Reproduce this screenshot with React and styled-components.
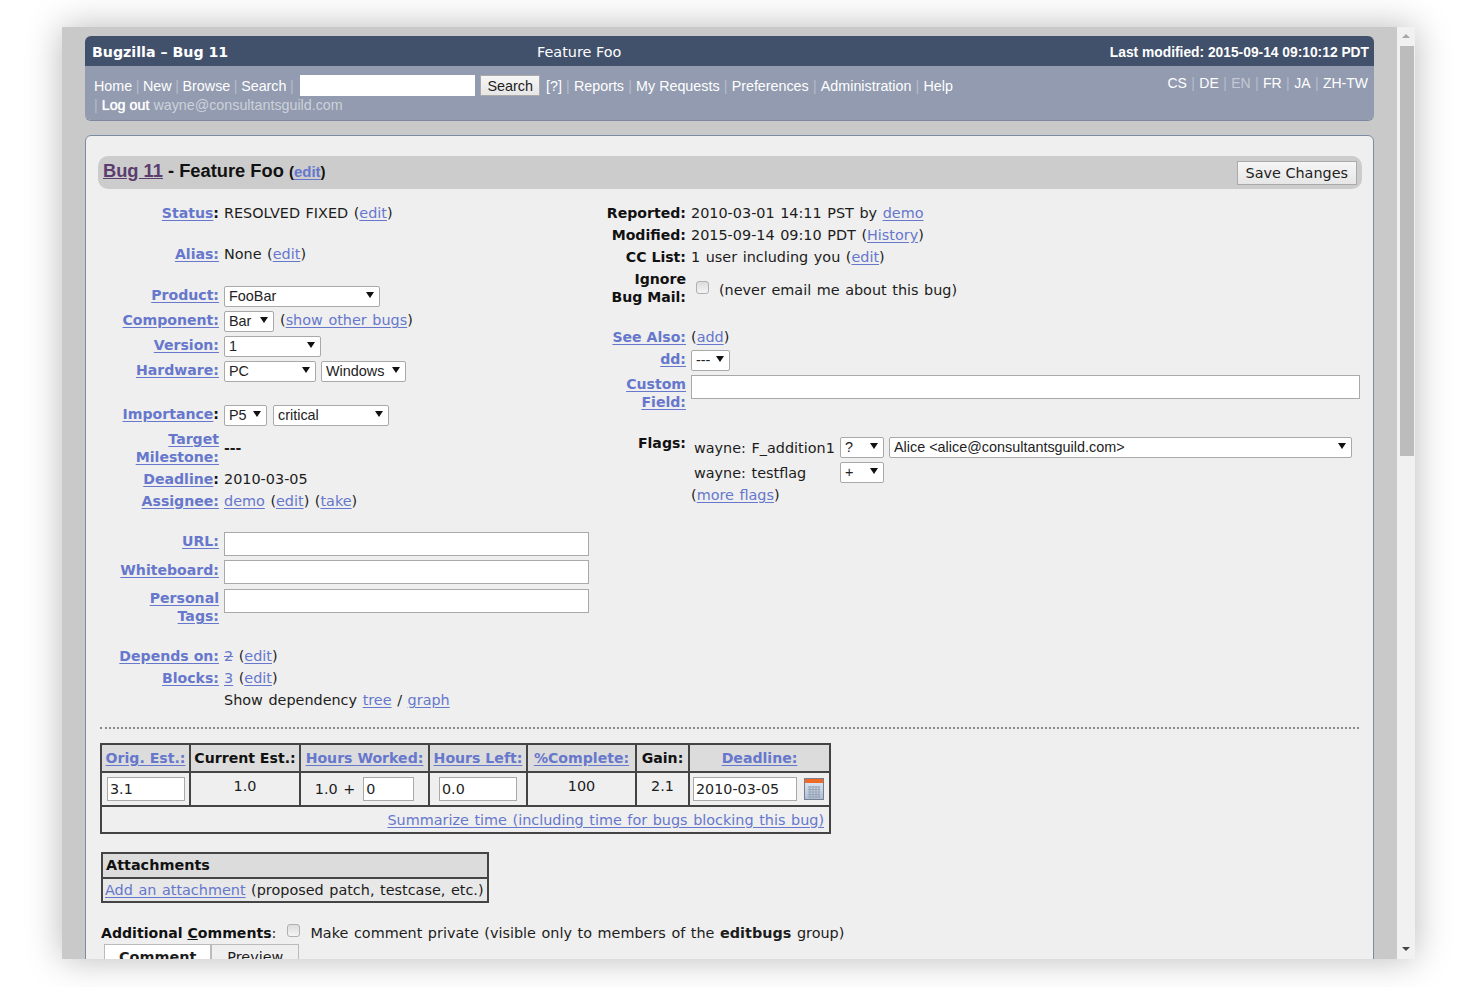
import React from "react"
import styled, { createGlobalStyle } from "styled-components"

const GlobalStyle = createGlobalStyle`
  html, body {
    margin: 0;
    height: 987px;
    overflow: hidden;
    background: #fff;
  }
`

const Stage = styled.div`
  height: 987px;
  padding: 27px 65px 28px 62px;
  box-sizing: border-box;
`

const Window = styled.div`
  display: flex;
  height: 932px;
  overflow: hidden;
  box-shadow: 0 0 34px rgba(0, 0, 0, 0.28);
`

const Page = styled.div`
  flex: 1;
  min-width: 0;
  padding: 9px 23px 0;
  background: #c9c9c9;
  font-family: "DejaVu Sans", Verdana, sans-serif;
  font-size: 14.4px;
  word-spacing: 1px;
  color: #1c1c1c;
`

const Scrollbar = styled.div`
  position: relative;
  flex: 0 0 18px;
  background: #f1f1f1;
`

const Thumb = styled.div`
  position: absolute;
  left: 3px;
  right: 1px;
  top: 19px;
  height: 410px;
  background: #bcbcbc;
`

const Arrow = styled.div`
  position: absolute;
  left: 5px;
  width: 0;
  height: 0;
  border-left: 4px solid transparent;
  border-right: 4px solid transparent;
  ${({ $down }) =>
    $down
      ? "bottom: 8px; border-top: 4px solid #444;"
      : "top: 7px; border-bottom: 4px solid #a8a8a8;"}
`

const Header = styled.header`
  border-radius: 6px;
  overflow: hidden;
  box-shadow: 0 1px 0 #7d879d;
  word-spacing: 0;
`

const TitleBar = styled.div`
  display: grid;
  grid-template-columns: 445px auto 1fr;
  align-items: center;
  height: 30px;
  padding: 2px 5px 0 7px;
  box-sizing: border-box;
  background: #41506b;
  color: #fff;
  font-size: 14.2px;
  font-weight: bold;
`

const PageTitle = styled.span`
  font-weight: normal;
  font-size: 14.4px;
`

const Modified = styled.span`
  justify-self: end;
  font-family: "Liberation Sans", Arial, sans-serif;
  font-size: 13.8px;
`

const NavBar = styled.div`
  display: flex;
  justify-content: space-between;
  height: 54px;
  padding: 9px 6px 0 9px;
  box-sizing: border-box;
  background: #929bb0;
  font-family: "Liberation Sans", Arial, sans-serif;
  font-size: 14.3px;
  color: #b6bdcb;
`

const NavLines = styled.div`
  line-height: 19px;
`

const NavLine = styled.div`
  display: flex;
  align-items: flex-end;
  height: 21px;
`

const NavSecond = styled.div`
  height: 19px;
  line-height: 18px;
  white-space: pre;
`

const NavLink = styled.a`
  color: #fff;
  white-space: pre;
  text-shadow: ${({ $heavy }) => ($heavy ? "0 0 1px #fff" : "none")};
`

const Sep = styled.span`
  color: #b6bdcb;
  margin: 0 ${({ $wide }) => ($wide ? 4.2 : 3.6)}px;
`

const UserMail = styled.span`
  color: #cdd1da;
`

const SearchBox = styled.input`
  width: 175px;
  height: 21px;
  box-sizing: border-box;
  margin: 0 5px 0 3px;
  padding: 0 3px;
  border: 0;
  background: #fff;
`

const Button = styled.button`
  height: ${({ $h }) => $h || 21}px;
  padding: 0 ${({ $pad }) => $pad || 8}px;
  border: 1px solid #aaa;
  background: linear-gradient(#f6f6f6, #e6e6e6);
  color: #222;
  font-family: ${({ $sans }) =>
    $sans ? '"Liberation Sans", Arial, sans-serif' : '"DejaVu Sans", Verdana, sans-serif'};
  font-size: 14.4px;
`

const SearchButton = styled(Button)`
  margin-right: 2px;
`

const Langs = styled.div`
  display: flex;
  align-items: center;
  height: 16px;
  color: #fff;
  white-space: pre;
  font-size: 14px;
`

const LangCurrent = styled.span`
  color: #c4c9d4;
`

const LangSep = styled.span`
  color: #b6bdcb;
  margin: 0 4.4px;
`

const Content = styled.main`
  margin-top: 15px;
  padding: 20px 11px 0 12px;
  height: 900px;
  background: #efefef;
  border: 1px solid #7d8aa3;
  border-radius: 6px;
`

const BugTitle = styled.div`
  display: flex;
  align-items: center;
  justify-content: space-between;
  height: 33px;
  padding: 0 5px;
  background: #ccc;
  border-radius: 10px;
  font-family: "Liberation Sans", Arial, sans-serif;
  font-size: 18.3px;
  font-weight: bold;
  color: #111;
  word-spacing: 0;
`

const BugHeading = styled.span`
  margin-bottom: 3px;
`

const BugId = styled.a`
  color: #5b3c6e;
  text-decoration: underline;
`

const EditSmall = styled.span`
  font-size: 15px;
`

const Link = styled.a`
  color: #6677cc;
  text-decoration: underline;
  text-underline-offset: 2px;
`

const Columns = styled.div`
  display: grid;
  grid-template-columns: 490px 1fr;
  padding: 13px 0 0 3px;
`

const Column = styled.div`
  display: flex;
  flex-direction: column;
`

const Field = styled.div`
  display: grid;
  grid-template-columns: ${({ $label }) => $label || 118}px 1fr;
  column-gap: 5px;
  margin-top: ${({ $top }) => $top || 0}px;
  min-height: ${({ $h }) => $h || 22}px;
  line-height: 18px;
  padding-top: 2px;
  box-sizing: border-box;
`

const Label = styled.div`
  padding-top: ${({ $pad }) => $pad || 0}px;
  text-align: right;
  font-size: 14.1px;
  font-weight: bold;
  word-spacing: 0;
  color: #111;
`

const Value = styled.div`
  padding-top: ${({ $pad }) => $pad || 0}px;
  white-space: pre;
  min-width: 0;
`

const Controls = styled.div`
  display: flex;
  align-items: flex-start;
  column-gap: ${({ $gap }) => $gap || 6}px;
  white-space: pre;
`

const MailRow = styled.div`
  display: flex;
  align-items: center;
  height: 18px;
  padding: 11px 0 0 5px;
  white-space: pre;
`

const Dashes = styled.span`
  font-weight: bold;
  font-size: 14px;
`

const SelectWrap = styled.span`
  position: relative;
  display: inline-block;
  flex: none;
  width: ${({ $w }) => $w}px;
  height: 21px;
  &::after {
    content: "";
    position: absolute;
    right: 6px;
    top: 6px;
    border-left: 4px solid transparent;
    border-right: 4px solid transparent;
    border-top: 6px solid #111;
    pointer-events: none;
  }
`

const SelectBox = styled.select`
  appearance: none;
  display: block;
  width: 100%;
  height: 100%;
  padding: 0 4px 2px;
  border: 1px solid #a9a9a9;
  border-radius: 2px;
  background: #fff;
  color: #222;
  font-family: "Liberation Sans", Arial, sans-serif;
  font-size: 14.4px;
`

const TextInput = styled.input`
  display: block;
  flex: none;
  box-sizing: border-box;
  width: ${({ $w }) => ($w ? `${$w}px` : "100%")};
  height: ${({ $h }) => $h || 24}px;
  padding: 0 2px;
  border: 1px solid #a9a9a9;
  background: #fff;
  color: #222;
  font-family: "DejaVu Sans", Verdana, sans-serif;
  font-size: 14.3px;
`

const Check = styled.span`
  display: inline-block;
  flex: none;
  width: 13px;
  height: 13px;
  margin: ${({ $margin }) => $margin || 0};
  box-sizing: border-box;
  border: 1px solid #b0b0b0;
  border-radius: 3px;
  background: linear-gradient(#dcdcdc, #f4f4f4);
`

const Strike = styled(Link)`
  text-decoration: line-through;
`

const FlagGrid = styled.div`
  display: grid;
  grid-template-columns: 141px 44px 1fr;
  column-gap: 5px;
  row-gap: 4px;
  align-items: center;
  width: 658px;
  padding: 6px 0 0 3px;
  white-space: pre;
`

const MoreFlags = styled(Value)`
  padding-top: 3px;
`

const Divider = styled.hr`
  margin: 16px 3px 14px 2px;
  border: 0;
  border-top: 2px dotted #888;
`

const TimeTable = styled.table`
  margin-left: 2px;
  border-collapse: collapse;
  width: 729px;
  table-layout: fixed;
  color: #1c1c1c;
  th, td {
    border: 2px solid #444;
    padding: 0 5px;
    box-sizing: border-box;
    text-align: center;
    white-space: pre;
  }
  th {
    height: 28px;
    padding: 0;
    background: #dcdcdc;
    font-size: 14.1px;
    font-weight: bold;
    word-spacing: 0;
    color: #111;
  }
`

const TimeCell = styled.td`
  height: 34px;
  vertical-align: ${({ $top }) => ($top ? "top" : "middle")};
  padding-top: ${({ $top }) => ($top ? "5px" : "0")} !important;
  ${({ $flush }) => ($flush ? "padding-left: 0 !important; padding-right: 0 !important;" : "")}
`

const TimeInline = styled.div`
  display: flex;
  align-items: center;
  justify-content: center;
  gap: ${({ $gap }) => $gap || 8}px;
  padding-right: ${({ $right }) => $right || 0}px;
`

const SummaryCell = styled.td`
  height: 27px;
  text-align: right !important;
`

const AttachTable = styled.div`
  width: 388px;
  margin: 18px 0 0 3px;
  box-sizing: border-box;
  border: 2px solid #444;
  white-space: pre;
`

const AttachHead = styled.div`
  height: 23px;
  line-height: 23px;
  padding-left: 3px;
  background: #dcdcdc;
  border-bottom: 2px solid #444;
  font-weight: bold;
  color: #111;
`

const AttachBody = styled.div`
  height: 22px;
  line-height: 22px;
  padding-left: 2px;
  background: #e8e8e8;
`

const CommentHead = styled.div`
  display: flex;
  align-items: center;
  margin: 19px 0 0 3px;
  height: 22px;
  white-space: pre;
`

const CommentLabel = styled.b`
  font-size: 14.1px;
  word-spacing: 0;
  color: #111;
`

const Tabs = styled.div`
  display: flex;
  margin: 0 0 0 6px;
`

const Tab = styled.div`
  height: 24px;
  line-height: 25px;
  box-sizing: border-box;
  padding: 0 ${({ $active }) => ($active ? 14 : 15)}px;
  border: 1px solid #bbb;
  border-bottom: 0;
  background: ${({ $active }) => ($active ? "#fff" : "#efefef")};
  font-weight: ${({ $active }) => ($active ? "bold" : "normal")};
`

const CalendarSvg = styled.svg`
  flex: none;
`

const Select = ({ w, value }) => (
  <SelectWrap $w={w}>
    <SelectBox defaultValue={value}>
      <option>{value}</option>
    </SelectBox>
  </SelectWrap>
)

const CalendarIcon = () => (
  <CalendarSvg width="20" height="22" viewBox="0 0 20 22">
    <defs>
      <linearGradient id="calBody" x1="0" y1="0" x2="0" y2="1">
        <stop offset="0" stopColor="#e4edf8" />
        <stop offset="1" stopColor="#a9bcd8" />
      </linearGradient>
    </defs>
    <rect x="0.5" y="0.5" width="19" height="21" fill="url(#calBody)" stroke="#7b7f8c" />
    <rect x="1" y="1" width="18" height="4" fill="#ee6a26" />
    <path
      d="M4 9h12M4 11.500h12M4 14h12M4 16.500h12M4 19h12M6 8v12M9 8v12M12 8v12M15 8v12"
      stroke="#9aa3b3"
      strokeWidth="1"
    />
  </CalendarSvg>
)

const navItems = ["Home", "New", "Browse", "Search"]
const navAfter = ["Reports", "My Requests", "Preferences", "Administration", "Help"]
const langs = ["CS", "DE", "EN", "FR", "JA", "ZH-TW"]

const App = () => (
  <>
    <GlobalStyle />
    <Stage>
      <Window>
        <Page>
          <Header>
            <TitleBar>
              <span>Bugzilla – Bug 11</span>
              <PageTitle>Feature Foo</PageTitle>
              <Modified>Last modified: 2015-09-14 09:10:12 PDT</Modified>
            </TitleBar>
            <NavBar>
              <NavLines>
                <NavLine>
                  {navItems.map((item) => (
                    <React.Fragment key={item}>
                      <NavLink>{item}</NavLink>
                      <Sep>|</Sep>
                    </React.Fragment>
                  ))}
                  <SearchBox />
                  <SearchButton $sans $pad={6}>Search</SearchButton>
                  <NavLink>{" [?]"}</NavLink>
                  {navAfter.map((item) => (
                    <React.Fragment key={item}>
                      <Sep $wide>|</Sep>
                      <NavLink>{item}</NavLink>
                    </React.Fragment>
                  ))}
                </NavLine>
                <NavSecond>
                  {"| "}
                  <NavLink $heavy>Log out</NavLink> <UserMail>wayne@consultantsguild.com</UserMail>
                </NavSecond>
              </NavLines>
              <Langs>
                {langs.map((lang, i) => (
                  <React.Fragment key={lang}>
                    {i > 0 && <LangSep>|</LangSep>}
                    {lang === "EN" ? <LangCurrent>{lang}</LangCurrent> : <span>{lang}</span>}
                  </React.Fragment>
                ))}
              </Langs>
            </NavBar>
          </Header>

          <Content>
            <BugTitle>
              <BugHeading>
                <BugId>Bug 11</BugId> - Feature Foo{" "}
                <EditSmall>
                  (<Link>edit</Link>)
                </EditSmall>
              </BugHeading>
              <Button $h={24} $pad={8}>Save Changes</Button>
            </BugTitle>

            <Columns>
              <Column>
                <Field $h={41}>
                  <Label><Link>Status</Link>:</Label>
                  <Value>RESOLVED FIXED (<Link>edit</Link>)</Value>
                </Field>
                <Field $h={41}>
                  <Label><Link>Alias:</Link></Label>
                  <Value>None (<Link>edit</Link>)</Value>
                </Field>
                <Field $h={25}>
                  <Label><Link>Product:</Link></Label>
                  <Controls><Select w={156} value="FooBar" /></Controls>
                </Field>
                <Field $h={25}>
                  <Label><Link>Component:</Link></Label>
                  <Controls><Select w={50} value="Bar" /><span>(<Link>show other bugs</Link>)</span></Controls>
                </Field>
                <Field $h={25}>
                  <Label><Link>Version:</Link></Label>
                  <Controls><Select w={97} value="1" /></Controls>
                </Field>
                <Field $h={25}>
                  <Label><Link>Hardware:</Link></Label>
                  <Controls $gap={5}><Select w={92} value="PC" /><Select w={85} value="Windows" /></Controls>
                </Field>
                <Field $h={25} $top={19}>
                  <Label><Link>Importance</Link>:</Label>
                  <Controls><Select w={43} value="P5" /><Select w={116} value="critical" /></Controls>
                </Field>
                <Field $h={40}>
                  <Label><Link>Target Milestone:</Link></Label>
                  <Value $pad={9}><Dashes>---</Dashes></Value>
                </Field>
                <Field>
                  <Label><Link>Deadline</Link>:</Label>
                  <Value>2010-03-05</Value>
                </Field>
                <Field $h={40}>
                  <Label><Link>Assignee:</Link></Label>
                  <Value><Link>demo</Link> (<Link>edit</Link>) (<Link>take</Link>)</Value>
                </Field>
                <Field $h={28}>
                  <Label><Link>URL:</Link></Label>
                  <Value><TextInput $w={365} /></Value>
                </Field>
                <Field $h={29}>
                  <Label $pad={1}><Link>Whiteboard:</Link></Label>
                  <Value><TextInput $w={365} /></Value>
                </Field>
                <Field $h={58}>
                  <Label><Link>Personal<br />Tags:</Link></Label>
                  <Value><TextInput $w={365} /></Value>
                </Field>
                <Field>
                  <Label><Link>Depends on:</Link></Label>
                  <Value><Strike>2</Strike> (<Link>edit</Link>)</Value>
                </Field>
                <Field>
                  <Label><Link>Blocks:</Link></Label>
                  <Value><Link>3</Link> (<Link>edit</Link>)</Value>
                </Field>
                <Field>
                  <Label />
                  <Value>Show dependency <Link>tree</Link> / <Link>graph</Link></Value>
                </Field>
              </Column>

              <Column>
                <Field $label={95}>
                  <Label>Reported:</Label>
                  <Value>2010-03-01 14:11 PST by <Link>demo</Link></Value>
                </Field>
                <Field $label={95}>
                  <Label>Modified:</Label>
                  <Value>2015-09-14 09:10 PDT (<Link>History</Link>)</Value>
                </Field>
                <Field $label={95}>
                  <Label>CC List:</Label>
                  <Value>1 user including you (<Link>edit</Link>)</Value>
                </Field>
                <Field $label={95} $h={58}>
                  <Label>Ignore<br />Bug Mail:</Label>
                  <MailRow>
                    <Check $margin="-6px 10px 0 0" />
                    (never email me about this bug)
                  </MailRow>
                </Field>
                <Field $label={95}>
                  <Label><Link>See Also:</Link></Label>
                  <Value>(<Link>add</Link>)</Value>
                </Field>
                <Field $label={95} $h={25}>
                  <Label><Link>dd:</Link></Label>
                  <Controls><Select w={39} value="---" /></Controls>
                </Field>
                <Field $label={95} $h={56}>
                  <Label><Link>Custom Field:</Link></Label>
                  <Value><TextInput $w={669} /></Value>
                </Field>
                <Field $label={95}>
                  <Label $pad={3}>Flags:</Label>
                  <Column>
                    <FlagGrid>
                      <span>wayne: F_addition1</span>
                      <Select w={44} value="?" />
                      <Select w={463} value="Alice <alice@consultantsguild.com>" />
                      <span>wayne: testflag</span>
                      <Select w={44} value="+" />
                    </FlagGrid>
                    <MoreFlags>(<Link>more flags</Link>)</MoreFlags>
                  </Column>
                </Field>
              </Column>
            </Columns>

            <Divider />

            <TimeTable>
              <colgroup>
                <col width="89" />
                <col width="110" />
                <col width="129" />
                <col width="98" />
                <col width="109" />
                <col width="53" />
                <col width="141" />
              </colgroup>
              <thead>
                <tr>
                  <th><Link>Orig. Est.:</Link></th>
                  <th>Current Est.:</th>
                  <th><Link>Hours Worked:</Link></th>
                  <th><Link>Hours Left:</Link></th>
                  <th><Link>%Complete:</Link></th>
                  <th>Gain:</th>
                  <th><Link>Deadline:</Link></th>
                </tr>
              </thead>
              <tbody>
                <tr>
                  <TimeCell><TextInput defaultValue="3.1" $h={24} $w={78} /></TimeCell>
                  <TimeCell $top>1.0</TimeCell>
                  <TimeCell>
                    <TimeInline>1.0 +<TextInput defaultValue="0" $h={24} $w={51} /></TimeInline>
                  </TimeCell>
                  <TimeCell><TimeInline><TextInput defaultValue="0.0" $h={24} $w={78} /></TimeInline></TimeCell>
                  <TimeCell $top>100</TimeCell>
                  <TimeCell $top>2.1</TimeCell>
                  <TimeCell $flush>
                    <TimeInline $gap={7} $right={2}>
                      <TextInput defaultValue="2010-03-05" $h={24} $w={104} />
                      <CalendarIcon />
                    </TimeInline>
                  </TimeCell>
                </tr>
                <tr>
                  <SummaryCell colSpan={7}>
                    <Link>Summarize time (including time for bugs blocking this bug)</Link>
                  </SummaryCell>
                </tr>
              </tbody>
            </TimeTable>

            <AttachTable>
              <AttachHead>Attachments</AttachHead>
              <AttachBody><Link>Add an attachment</Link> (proposed patch, testcase, etc.)</AttachBody>
            </AttachTable>

            <CommentHead>
              <CommentLabel>Additional <u>C</u>omments</CommentLabel>:
              <Check $margin="-5px 10px 0 11px" />
              {"Make comment private (visible only to members of the "}
              <b>editbugs</b>
              {" group)"}
            </CommentHead>
            <Tabs>
              <Tab $active>Comment</Tab>
              <Tab>Preview</Tab>
            </Tabs>
          </Content>
        </Page>
        <Scrollbar>
          <Arrow />
          <Thumb />
          <Arrow $down />
        </Scrollbar>
      </Window>
    </Stage>
  </>
)

export default App
